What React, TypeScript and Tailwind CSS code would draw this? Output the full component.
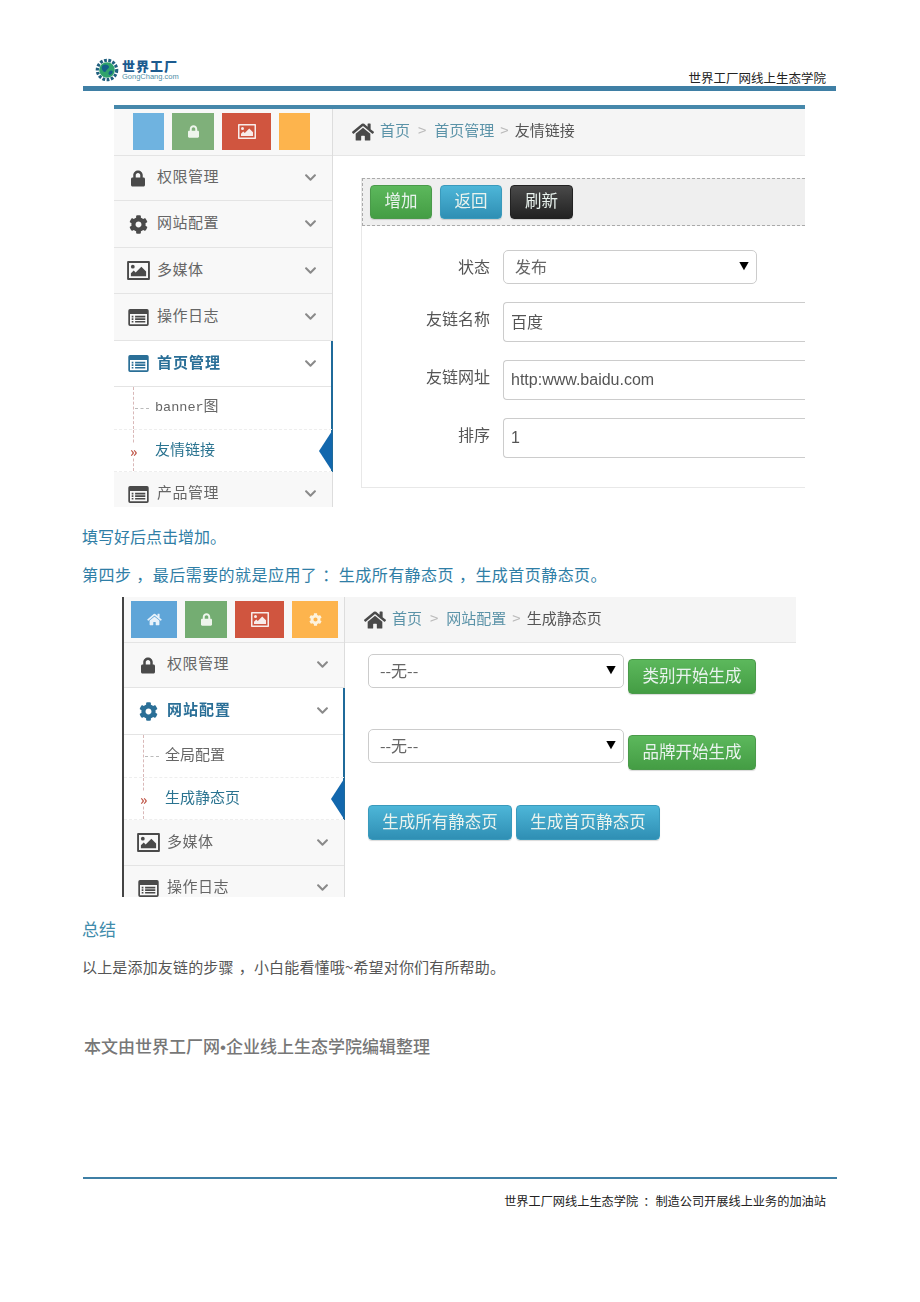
import React from 'react'
import { FaChevronDown, FaCog, FaHome, FaLock } from 'react-icons/fa'

const PictureIcon = ({ className }: { className?: string }) => (
  <svg viewBox="0 0 24 20" className={className} fill="currentColor">
    <path d="M1 0h22a1 1 0 0 1 1 1v18a1 1 0 0 1-1 1H1a1 1 0 0 1-1-1V1a1 1 0 0 1 1-1zm1 2v16h20V2H2z" />
    <circle cx="6" cy="6" r="2" />
    <path d="M4 16v-3l3-3 2 2 6-6 5 5v5H4z" />
  </svg>
)

const ListIcon = ({ className }: { className?: string }) => (
  <svg viewBox="0 0 24 20" className={className} fill="currentColor">
    <path d="M2 0h20a2 2 0 0 1 2 2v16a2 2 0 0 1-2 2H2a2 2 0 0 1-2-2V2a2 2 0 0 1 2-2zm0 6v12h20V6H2z" />
    <path d="M4 8h2v2H4zM8 8h12v2H8zM4 11h2v2H4zM8 11h12v2H8zM4 14h2v2H4zM8 14h12v2H8z" />
  </svg>
)

const Logo = () => (
  <div className="flex items-center gap-[3px]">
    <svg viewBox="0 0 26 26" className="w-[24px] h-[24px]">
      <circle cx="13" cy="13" r="10.5" fill="none" stroke="#1f5f7f" strokeWidth="3.5" strokeDasharray="3 1.6" />
      <circle cx="13" cy="13" r="8.5" fill="#2fa36b" />
      <path d="M8 8c3-2 6-1 7 1s-2 3-3 5-3 1-4-1-1-3 0-5zM16 14c2-1 4 0 3 2s-3 3-4 2 0-3 1-4z" fill="#145f8a" />
    </svg>
    <div className="flex flex-col leading-none">
      <span className="text-[13px] leading-[13px] font-black tracking-[1px] text-[#1d5b8f]">世界工厂</span>
      <span className="text-[7.5px] leading-[9px] text-[#4f8fa8] font-['Liberation_Sans',sans-serif]">GongChang.com</span>
    </div>
  </div>
)

// Full-width punctuation sits further right in its cell in the reference
const Mark = ({ children }: { children: string }) => <span className="pl-[5px]">{children}</span>

const Row = ({
  icon,
  label,
  height,
  active,
}: {
  icon: React.ReactNode
  label: string
  height: string
  active?: boolean
}) => (
  <div className={`${height} flex items-center border-b border-[#e4e4e4] ${active ? 'bg-white' : 'bg-[#f8f8f8]'}`}>
    <div className={`w-[43px] pl-[5px] flex justify-center ${active ? 'text-[#2a6f97]' : 'text-[#4a4a4a]'}`}>{icon}</div>
    <span
      className={`flex-1 mb-[3px] text-[15px] ${active ? 'font-bold tracking-[1px] text-[#2a6f97]' : 'tracking-[0.5px] text-[#666]'}`}
    >
      {label}
    </span>
    <FaChevronDown className="w-[13px] h-[13px] mr-[15px] mb-[1px] text-[#8a8a8a]" />
  </div>
)

const SubRow = ({ label, height, current }: { label: React.ReactNode; height: string; current?: boolean }) => (
  <div className={`${height} relative flex items-center pl-[41px] border-b border-dashed border-[#eee]`}>
    <span className="absolute left-[19px] top-0 bottom-0 border-l border-dashed border-[#d9b8b8]" />
    {current ? (
      <span className="absolute left-[16px] text-[14px] leading-none font-bold text-[#c0584a] bg-white">»</span>
    ) : (
      <span className="absolute left-[21px] w-[14px] border-t border-dashed border-[#bbb]" />
    )}
    <span className={`mb-[3px] text-[15px] ${current ? 'text-[#2a7390]' : 'text-[#666]'}`}>{label}</span>
    {current && (
      <span className="absolute right-0 w-0 h-0 border-y-[20px] border-y-transparent border-r-[13px] border-r-[#1267ad]" />
    )}
  </div>
)

const Crumbs = ({ middle, last }: { middle: string; last: string }) => (
  <div className="flex-1 flex items-center bg-[#f5f5f5] border-b border-[#e6e6e6] pl-[19px] text-[15px]">
    <FaHome className="w-[22px] h-[20px] text-[#4a4a4a]" />
    <span className="ml-[6px] mb-[3px] text-[#5b93a8]">首页</span>
    <span className="mx-[8px] mb-[3px] text-[#bbb]">&gt;</span>
    <span className="mb-[3px] text-[#5b93a8]">{middle}</span>
    <span className="mx-[6px] mb-[3px] text-[#bbb]">&gt;</span>
    <span className="mb-[3px] text-[#555]">{last}</span>
  </div>
)

const Btn = ({ label, color, className }: { label: string; color: 'green' | 'blue' | 'dark'; className: string }) => {
  const tone = {
    green: 'from-[#5cb85c] to-[#449d44] border-[#4a9a4a]',
    blue: 'from-[#4db6d8] to-[#2f8fb4] border-[#3a9abc]',
    dark: 'from-[#4a4a4a] to-[#222] border-[#222]',
  }[color]
  return (
    <div
      className={`${className} flex items-center justify-center pb-[3px] rounded-[4px] border bg-gradient-to-b ${tone} text-[16.5px] text-[#e9f3ee] shadow-[0_1px_1px_rgba(0,0,0,0.15)]`}
    >
      {label}
    </div>
  )
}

const Select = ({ label, className }: { label: string; className: string }) => (
  <div
    className={`${className} flex items-center justify-between rounded-[5px] border border-[#ccc] bg-white pl-[11px] pr-[7px] text-[16px] text-[#666]`}
  >
    <span className="mb-[3px]">{label}</span>
    <span className="text-[10px] text-black mb-[3px]">▼</span>
  </div>
)

const FormRow = ({ label, value, latin }: { label: string; value: string; latin?: boolean }) => (
  <div className="flex items-center h-[40px] mb-[18px]">
    <span className="w-[129px] pr-[1px] text-right text-[16px] text-[#555] mb-[8px]">{label}</span>
    <div
      className={`ml-[12px] flex-1 h-full flex items-center pl-[7px] border border-r-0 border-[#ccc] rounded-l-[4px] text-[#555] ${
        latin ? "text-[16px] font-['Liberation_Sans',sans-serif]" : 'text-[16px] pb-[3px]'
      }`}
    >
      {value}
    </div>
  </div>
)

const App = () => {
  return (
    <div className="w-[920px] h-[1302px] bg-white overflow-hidden font-['Noto_Sans_CJK_SC',sans-serif]">
      {/* Page header */}
      <header className="ml-[83px] w-[753px] h-[91px] flex flex-col justify-end">
        <div className="flex items-end justify-between pl-[12px] pr-[10px]">
          <div className="mb-[4px]">
            <Logo />
          </div>
          <span className="text-[12.5px] leading-[16px] text-[#222]">世界工厂网线上生态学院</span>
        </div>
        <div className="h-[5px] bg-[#3f7fa5]" />
      </header>

      {/* First screenshot */}
      <section className="mt-[14px] ml-[114px] w-[691px] h-[402px] overflow-hidden border-t-[4px] border-[#4688ab] flex blur-[0.4px]">
        <aside className="w-[219px] shrink-0 border-r border-[#ddd]">
          <div className="h-[47px] bg-[#f8f8f8] border-b border-[#e4e4e4] pl-[19px] pt-[4px] flex gap-[8px]">
            <div className="w-[31px] h-[37px] bg-[#6fb3e0]" />
            <div className="w-[42px] h-[37px] bg-[#7fb07a] flex items-center justify-center">
              <FaLock className="w-[11px] h-[13px] text-[#eef5ec]" />
            </div>
            <div className="w-[49px] h-[37px] bg-[#d0553f] flex items-center justify-center">
              <PictureIcon className="w-[18px] h-[15px] text-[#f8ecea]" />
            </div>
            <div className="w-[31px] h-[37px] bg-[#fdb44d]" />
          </div>
          <Row icon={<FaLock className="w-[14px] h-[17px]" />} label="权限管理" height="h-[45px]" />
          <Row icon={<FaCog className="w-[19px] h-[19px]" />} label="网站配置" height="h-[47px]" />
          <Row icon={<PictureIcon className="w-[23px] h-[19px]" />} label="多媒体" height="h-[46px]" />
          <Row icon={<ListIcon className="w-[21px] h-[17px]" />} label="操作日志" height="h-[47px]" />
          <div className="relative">
            <span className="absolute right-[-1px] top-0 bottom-0 w-[2px] bg-[#1f6a9a]" />
            <Row icon={<ListIcon className="w-[21px] h-[17px]" />} label="首页管理" height="h-[46px]" active />
            <SubRow
              label={
                <>
                  <span className="font-['Liberation_Mono',monospace] text-[13.5px]">banner</span>图
                </>
              }
              height="h-[43px]"
            />
            <SubRow label="友情链接" height="h-[42px]" current />
          </div>
          <Row icon={<ListIcon className="w-[21px] h-[17px]" />} label="产品管理" height="h-[45px]" />
        </aside>

        <div className="flex-1 flex flex-col">
          <div className="h-[47px] shrink-0 flex">
            <Crumbs middle="首页管理" last="友情链接" />
          </div>
          <div className="ml-[28px] mt-[22px] h-[310px] border-l border-b border-[#e8e8e8]">
            <div className="h-[48px] bg-[#efefef] border-y border-l border-dashed border-[#aaa] flex items-center pl-[7px] gap-[8px]">
              <Btn label="增加" color="green" className="w-[62px] h-[34px]" />
              <Btn label="返回" color="blue" className="w-[62px] h-[34px]" />
              <Btn label="刷新" color="dark" className="w-[63px] h-[34px]" />
            </div>
            <div className="pt-[24px]">
              <div className="flex items-center h-[34px] mb-[18px]">
                <span className="w-[129px] pr-[1px] mb-[3px] text-right text-[16px] text-[#555]">状态</span>
                <Select label="发布" className="ml-[12px] w-[254px] h-full" />
              </div>
              <FormRow label="友链名称" value="百度" />
              <FormRow label="友链网址" value="http:www.baidu.com" latin />
              <FormRow label="排序" value="1" latin />
            </div>
          </div>
        </div>
      </section>

      <p className="mt-[18px] ml-[82px] text-[16px] leading-[22px] text-[#2f7ea6]">填写好后点击增加。</p>
      <p className="mt-[16px] ml-[82px] text-[16px] leading-[22px] tracking-[0.45px] text-[#2f7ea6]">
        第四步<Mark>，</Mark>最后需要的就是应用了<Mark>：</Mark>生成所有静态页<Mark>，</Mark>生成首页静态页。
      </p>

      {/* Second screenshot */}
      <section className="mt-[12px] ml-[122px] w-[674px] h-[300px] overflow-hidden border-l-2 border-[#444] flex blur-[0.4px]">
        <aside className="w-[221px] shrink-0 border-r border-[#ddd]">
          <div className="h-[46px] bg-[#f8f8f8] border-b border-[#e4e4e4] pl-[7px] pt-[4px] flex gap-[8px]">
            <div className="w-[46px] h-[37px] bg-[#5fa5d8] flex items-center justify-center">
              <FaHome className="w-[15px] h-[13px] text-[#e8f2fa]" />
            </div>
            <div className="w-[42px] h-[37px] bg-[#74ad72] flex items-center justify-center">
              <FaLock className="w-[11px] h-[13px] text-[#eef5ec]" />
            </div>
            <div className="w-[49px] h-[37px] bg-[#d0553f] flex items-center justify-center">
              <PictureIcon className="w-[18px] h-[15px] text-[#f8ecea]" />
            </div>
            <div className="w-[46px] h-[37px] bg-[#fdb44d] flex items-center justify-center">
              <FaCog className="w-[13px] h-[13px] text-[#fdf2dc]" />
            </div>
          </div>
          <Row icon={<FaLock className="w-[14px] h-[17px]" />} label="权限管理" height="h-[45px]" />
          <div className="relative">
            <span className="absolute right-[-1px] top-0 bottom-0 w-[2px] bg-[#1f6a9a]" />
            <Row icon={<FaCog className="w-[19px] h-[19px]" />} label="网站配置" height="h-[47px]" active />
            <SubRow label="全局配置" height="h-[43px]" />
            <SubRow label="生成静态页" height="h-[42px]" current />
          </div>
          <Row icon={<PictureIcon className="w-[23px] h-[19px]" />} label="多媒体" height="h-[46px]" />
          <Row icon={<ListIcon className="w-[21px] h-[17px]" />} label="操作日志" height="h-[45px]" />
        </aside>

        <div className="flex-1 flex flex-col">
          <div className="h-[46px] shrink-0 flex">
            <Crumbs middle="网站配置" last="生成静态页" />
          </div>
          <div className="pl-[23px] pt-[11px]">
            <div className="flex items-start gap-[4px]">
              <Select label="--无--" className="w-[256px] h-[34px]" />
              <Btn label="类别开始生成" color="green" className="w-[128px] h-[35px] mt-[5px]" />
            </div>
            <div className="flex items-start gap-[4px] mt-[35px]">
              <Select label="--无--" className="w-[256px] h-[34px]" />
              <Btn label="品牌开始生成" color="green" className="w-[128px] h-[35px] mt-[6px]" />
            </div>
            <div className="flex gap-[4px] mt-[35px]">
              <Btn label="生成所有静态页" color="blue" className="w-[144px] h-[35px]" />
              <Btn label="生成首页静态页" color="blue" className="w-[144px] h-[35px]" />
            </div>
          </div>
        </div>
      </section>

      <p className="mt-[21px] ml-[82px] text-[17px] leading-[22px] text-[#3f8bab]">总结</p>
      <p className="mt-[16px] ml-[82px] text-[15px] leading-[22px] tracking-[0.17px] text-[#555]">
        以上是添加友链的步骤<Mark>，</Mark>小白能看懂哦~希望对你们有所帮助。
      </p>
      <p className="mt-[57px] ml-[84px] text-[17px] leading-[22px] font-medium text-[#777]">
        本文由世界工厂网<span className="font-['Liberation_Sans',sans-serif]">•</span>企业线上生态学院编辑整理
      </p>

      {/* Page footer */}
      <footer className="mt-[118px] ml-[83px] w-[754px]">
        <div className="h-[2px] bg-[#3f7fa5]" />
        <p className="mt-[13px] pr-[11px] text-right text-[12.2px] leading-[18px] text-[#222]">
          世界工厂网线上生态学院<Mark>：</Mark>制造公司开展线上业务的加油站
        </p>
      </footer>
    </div>
  )
}

export default App
